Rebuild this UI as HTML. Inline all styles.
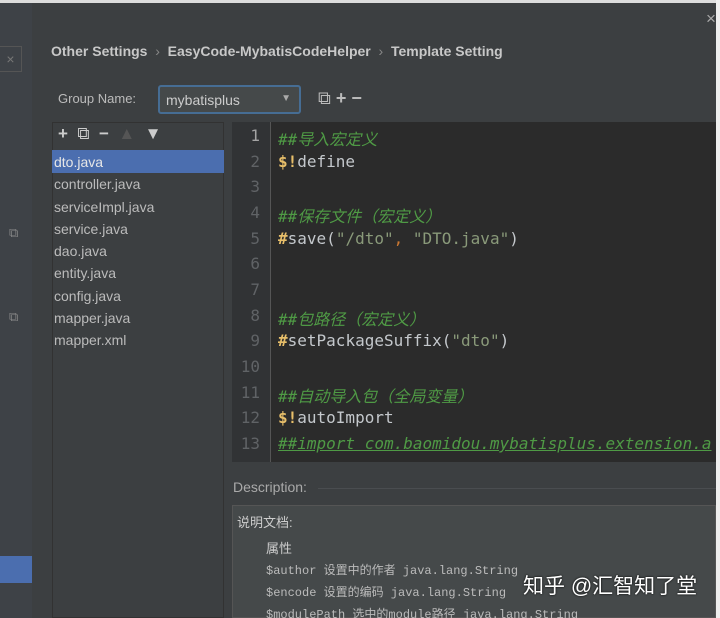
<!DOCTYPE html>
<html><head><meta charset="utf-8"><style>
*{margin:0;padding:0;box-sizing:border-box}
html,body{width:720px;height:618px;overflow:hidden}
body{background:#3c3f41;position:relative;font-family:"Liberation Sans","Noto Sans CJK SC",sans-serif;color:#bbb}
.a{position:absolute}
.mono{font-family:"DejaVu Sans Mono","Liberation Mono",monospace}
.ln{position:absolute;left:0;width:38px;text-align:right;padding-right:10px;color:#606366;font-size:16px}
.cl{position:absolute;left:46px;font-size:16px;color:#c4c8cc;white-space:pre}
.cl.cm{color:#4f9a45;font-style:italic}
.y{color:#e8bf6a;font-weight:bold}
.s{color:#8a9a7a}
.f li{list-style:none;height:22.3px;font-size:14px;padding-left:2px;line-height:22px}
</style></head><body>
<div class="a" style="left:0;top:0;width:720px;height:3px;background:#ddd"></div>
<div class="a" style="left:716px;top:0;width:4px;height:618px;background:#eee"></div>
<div class="a" style="left:0;top:3px;width:32px;height:615px;background:#3e4247"></div>
<div class="a" style="left:0;top:46px;width:22px;height:26px;border:1px solid #555;border-left:none;color:#777;font-size:14px;text-align:center;line-height:24px">×</div>
<div class="a" style="left:9px;top:225px;color:#888;font-size:13px">⧉</div>
<div class="a" style="left:9px;top:309px;color:#888;font-size:13px">⧉</div>
<div class="a" style="left:0;top:556px;width:32px;height:27px;background:#4b6eaf"></div>
<div class="a" style="left:706px;top:9px;color:#aaa;font-size:17px">×</div>
<div class="a" style="left:51px;top:43px;font-size:14px;font-weight:bold;color:#c8c8c8;white-space:pre">Other Settings  <span style="color:#888;font-weight:normal">›</span>  EasyCode-MybatisCodeHelper  <span style="color:#888;font-weight:normal">›</span>  Template Setting</div>
<div class="a" style="left:58px;top:91px;font-size:13px;color:#bbb">Group Name:</div>
<div class="a" style="left:158px;top:85px;width:143px;height:29px;border:2px solid #466d94;border-radius:3px;background:#45494a;font-size:14px;padding:5px 6px;color:#ccc">mybatisplus<span style="position:absolute;right:8px;top:6px;font-size:10px;color:#aaa">▼</span></div>
<div class="a" style="left:318px;top:88px;font-size:18px;color:#bbb;white-space:pre">⧉ <b>+</b> <b>−</b></div>
<div class="a" style="left:52px;top:122px;width:172px;height:496px;background:#3c3f41;border:1px solid #323232"></div>
<div class="a" style="left:58px;top:124px;font-size:17px;color:#ccc;white-space:pre"><b>+</b>  ⧉  <b>−</b>  <span style="color:#555">▲</span>  ▼</div>
<div class="a" style="left:52px;top:150px;width:172px;height:23px;background:#4b6eaf"></div>
<ul class="a f" style="left:52px;top:151px;color:#bbb">
<li style="color:#e6e6e6">dto.java</li><li>controller.java</li><li>serviceImpl.java</li><li>service.java</li><li>dao.java</li><li>entity.java</li><li>config.java</li><li>mapper.java</li><li>mapper.xml</li></ul>
<div class="a mono" style="left:232px;top:122px;width:484px;height:340px;background:#2b2b2b">
<div class="a" style="left:0;top:0;width:38px;height:340px;background:#313335"></div>
<div class="a" style="left:38px;top:0;width:1px;height:340px;background:#555"></div>
<div class="ln" style="top:4px;color:#a4a4a4">1</div><div class="ln" style="top:30px">2</div><div class="ln" style="top:55px">3</div><div class="ln" style="top:81px">4</div><div class="ln" style="top:107px">5</div><div class="ln" style="top:132px">6</div><div class="ln" style="top:158px">7</div><div class="ln" style="top:184px">8</div><div class="ln" style="top:209px">9</div><div class="ln" style="top:235px">10</div><div class="ln" style="top:261px">11</div><div class="ln" style="top:286px">12</div><div class="ln" style="top:312px">13</div>
<div class="cl cm" style="top:4px">##导入宏定义</div>
<div class="cl" style="top:30px"><span class="y">$!</span>define</div>
<div class="cl cm" style="top:81px">##保存文件（宏定义）</div>
<div class="cl" style="top:107px"><span class="y">#</span>save(<span class="s">"/dto"</span><span style="color:#cc7832">, </span><span class="s">"DTO.java"</span>)</div>
<div class="cl cm" style="top:184px">##包路径（宏定义）</div>
<div class="cl" style="top:209px"><span class="y">#</span>setPackageSuffix(<span class="s">"dto"</span>)</div>
<div class="cl cm" style="top:261px">##自动导入包（全局变量）</div>
<div class="cl" style="top:286px"><span class="y">$!</span>autoImport</div>
<div class="cl cm" style="top:312px;text-decoration:underline">##import com.baomidou.mybatisplus.extension.a</div>
</div>
<div class="a" style="left:233px;top:479px;font-size:14px;color:#aaa">Description:</div>
<div class="a" style="left:318px;top:488px;width:398px;height:1px;background:#4a4d50"></div>
<div class="a" style="left:232px;top:505px;width:484px;height:113px;background:#45494a;border:1px solid #555"></div>
<div class="a" style="left:237px;top:512px;font-size:13px;color:#ccc">说明文档:</div>
<div class="a" style="left:266px;top:538px;font-size:13px;color:#ccc">属性</div>
<div class="a" style="left:266px;top:560px;font-size:12px;color:#bbb;font-family:'Liberation Mono','Noto Sans CJK SC',monospace;line-height:22px;white-space:pre">$author 设置中的作者 java.lang.String
$encode 设置的编码 java.lang.String
$modulePath 选中的module路径 java.lang.String</div>
<div class="a" style="left:523px;top:570px;font-size:21px;color:#fff;text-shadow:0 0 2px #000">知乎 @汇智知了堂</div>
</body></html>
